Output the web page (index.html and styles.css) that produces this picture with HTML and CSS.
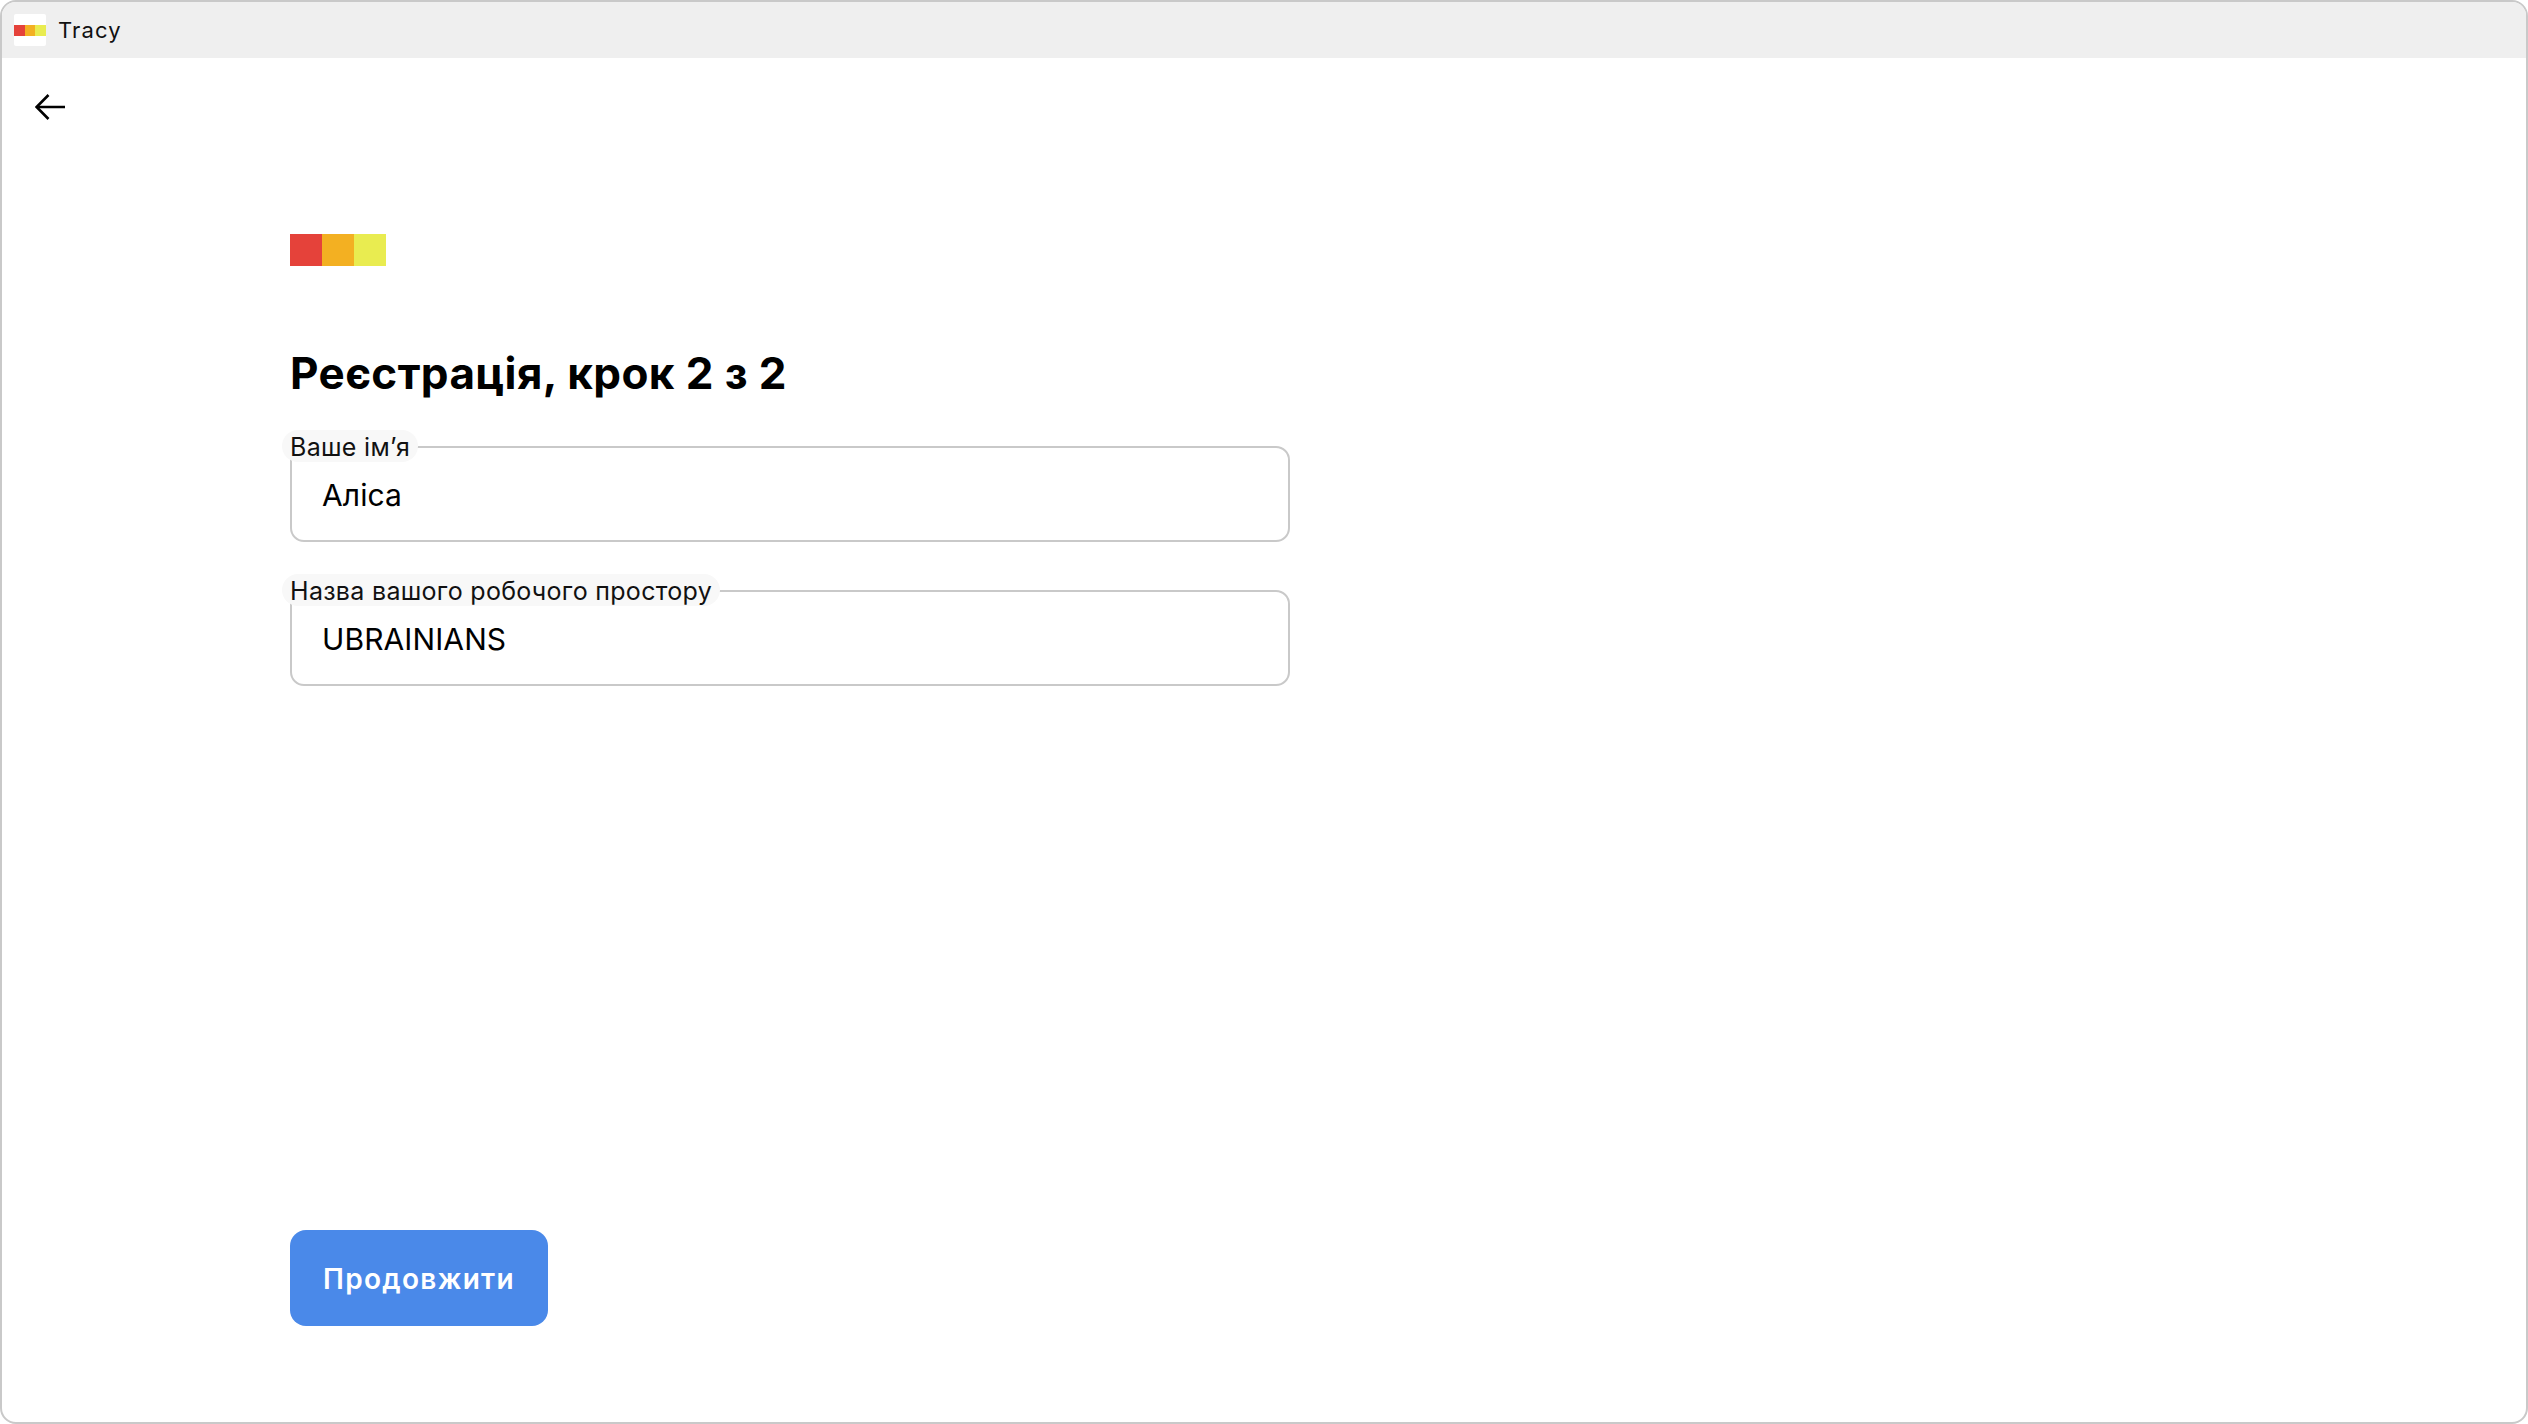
FILE: index.html
```html
<!DOCTYPE html>
<html lang="uk">
<head>
<meta charset="utf-8">
<title>Tracy</title>
<link rel="stylesheet" href="styles.css">
</head>
<body>
<div class="window">
  <header class="titlebar">
    <span class="app-icon"><span class="app-stripes"><i class="red"></i><i class="orange"></i><i class="yellow"></i></span></span>
    <span class="app-name">Tracy</span>
  </header>
  <main class="content">
    <button class="back" aria-label="Назад">
      <svg width="30" height="26" viewBox="0 0 30 26" fill="none" stroke="#000" stroke-width="2.6"><path d="M30 13H2"/><path d="M13.5 1 1.6 13l11.9 12"/></svg>
    </button>
    <section class="form">
      <div class="logo"><i class="red"></i><i class="orange"></i><i class="yellow"></i></div>
      <h1 class="heading">Реєстрація, крок 2 з 2</h1>
      <div class="field">
        <span class="field-label">Ваше імʼя</span>
        <span class="field-value">Аліса</span>
      </div>
      <div class="field">
        <span class="field-label">Назва вашого робочого простору</span>
        <span class="field-value">UBRAINIANS</span>
      </div>
      <button class="submit">Продовжити</button>
    </section>
  </main>
</div>
</body>
</html>
```
FILE: styles.css
```css
* { box-sizing: border-box; }
html, body { margin: 0; height: 100%; background: #fff; }
body { font-family: Inter, "Noto Sans", sans-serif; color: #000; }
i { display: block; }
.red { background: #e5423a; }
.orange { background: #f3b022; }
.yellow { background: #e9ec50; }

.window {
  height: 1424px;
  display: flex;
  flex-direction: column;
  border: 2px solid #c9c9c9;
  border-radius: 16px;
  overflow: hidden;
  background: #fff;
}
.titlebar {
  flex: none;
  height: 56px;
  background: #efefef;
  display: flex;
  align-items: center;
  gap: 12px;
  padding: 0 0 0 12px;
}
.app-icon {
  width: 32px;
  height: 32px;
  background: #fff;
  border-radius: 2px;
  display: flex;
  align-items: center;
}
.app-stripes { display: flex; width: 100%; height: 11px; }
.app-stripes i { flex: 1; }
.app-name { font-size: 22px; line-height: 28px; letter-spacing: 1.1px; color: #111; }

.content {
  flex: 1;
  display: flex;
  flex-direction: column;
  padding: 36px 0 0 33px;
}
.back {
  flex: none;
  align-self: flex-start;
  width: 30px;
  height: 26px;
  padding: 0;
  border: 0;
  background: none;
  display: block;
}
.back svg { display: block; }

.form {
  display: flex;
  flex-direction: column;
  align-items: flex-start;
  width: 1000px;
  margin-left: 255px;
  flex: 1;
}
.logo { display: flex; margin-top: 114px; }
.logo i { width: 32px; height: 32px; }
.heading {
  margin: 82px 0 0;
  font-size: 44px;
  line-height: 50px;
  font-weight: 700;
  letter-spacing: 0.4px;
  white-space: nowrap;
}
.field {
  position: relative;
  width: 1000px;
  height: 96px;
  border: 2px solid #c9c9c9;
  border-radius: 14px;
  padding: 2px 0 0 30px;
  display: flex;
  align-items: center;
}
.heading + .field { margin-top: 48px; }
.field + .field { margin-top: 48px; }
.field-label {
  position: absolute;
  left: -10px;
  top: -18px;
  height: 32px;
  padding: 0 8px;
  background: #f8f8f8;
  border-radius: 16px;
  font-size: 25px;
  line-height: 34px;
  letter-spacing: 0.3px;
  white-space: nowrap;
  color: #111;
}
.field-value { font-size: 30px; line-height: 36px; letter-spacing: 0.1px; }
.submit {
  margin-top: auto;
  margin-bottom: 96px;
  width: 258px;
  height: 96px;
  padding: 2px 0 0;
  border: 0;
  border-radius: 16px;
  background: #4a89e9;
  color: #fff;
  font: 600 28px/36px Inter, "Noto Sans", sans-serif;
  letter-spacing: 1.3px;
}
```
